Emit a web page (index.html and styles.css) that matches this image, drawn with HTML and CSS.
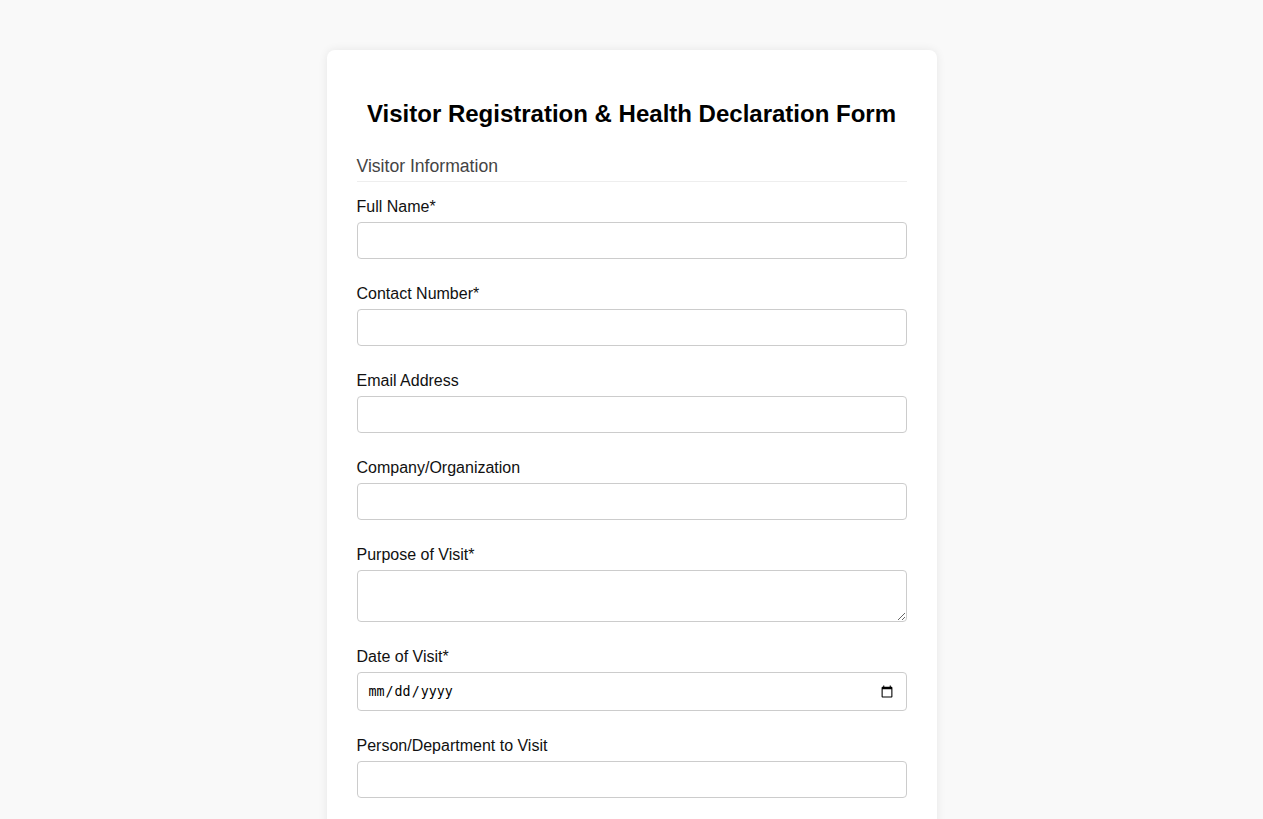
FILE: index.html
```html
<!DOCTYPE html>
<html lang="en">
<head>
<meta charset="utf-8">
<title>Visitor Registration &amp; Health Declaration Form</title>
<link rel="stylesheet" href="styles.css">
</head>
<body>
<div class="card">
  <h1 class="title">Visitor Registration &amp; Health Declaration Form</h1>
  <form>
    <h3 class="section-title">Visitor Information</h3>
    <div class="group">
      <label for="fullname">Full Name*</label>
      <input type="text" id="fullname">
    </div>
    <div class="group">
      <label for="contact">Contact Number*</label>
      <input type="tel" id="contact">
    </div>
    <div class="group">
      <label for="email">Email Address</label>
      <input type="email" id="email">
    </div>
    <div class="group">
      <label for="company">Company/Organization</label>
      <input type="text" id="company">
    </div>
    <div class="group">
      <label for="purpose">Purpose of Visit*</label>
      <textarea id="purpose"></textarea>
    </div>
    <div class="group">
      <label for="date">Date of Visit*</label>
      <input type="date" id="date">
    </div>
    <div class="group">
      <label for="person">Person/Department to Visit</label>
      <input type="text" id="person">
    </div>
  </form>
</div>
</body>
</html>
```
FILE: styles.css
```css
html, body {
  margin: 0;
  padding: 0;
}
body {
  background: #f9f9f9;
  font-family: "Liberation Sans", Arial, sans-serif;
  color: #111;
  padding: 50px 20px;
}
.card {
  max-width: 550px;
  margin: 0 auto;
  background: #fff;
  padding: 30px;
  border-radius: 8px;
  box-shadow: 0 0 10px rgba(0, 0, 0, 0.08);
}
.title {
  font-size: 24px;
  font-weight: bold;
  text-align: center;
  color: #000;
  margin: 20px 0 28px;
}
.section-title {
  font-size: 17.6px;
  font-weight: normal;
  color: #444;
  margin: 0 0 16px;
  padding-bottom: 4px;
  border-bottom: 1px solid #eee;
}
.group {
  margin-bottom: 26px;
}
.group label {
  display: block;
  font-size: 16px;
  margin-bottom: 6px;
}
.group input,
.group textarea {
  width: 100%;
  box-sizing: border-box;
  padding: 10px;
  border: 1px solid #ccc;
  border-radius: 4px;
}
.group textarea {
  display: block;
}
```
